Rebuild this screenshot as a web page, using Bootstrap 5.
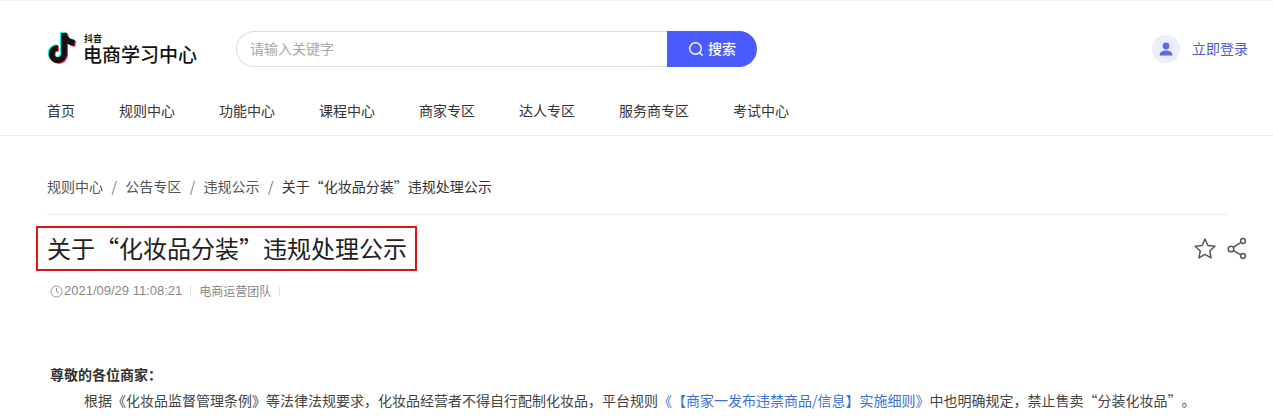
<!DOCTYPE html>
<html lang="zh-CN">
<head>
<meta charset="utf-8">
<title>关于“化妆品分装”违规处理公示</title>
<link rel="stylesheet" href="https://cdn.jsdelivr.net/npm/bootstrap@5.3.0/dist/css/bootstrap.min.css">
<style>
html,body{height:417px;overflow:hidden}
body{font-family:"Noto Sans CJK SC","Liberation Sans",sans-serif;color:#333;background:#fff;font-size:14px;text-spacing-trim:space-all}
.site-head{height:136px;border-top:1px solid #f0f0f0;border-bottom:1px solid #ebebeb;padding:30px 25px 0 47px}
.top-line{height:36px}
.logo-box{width:189px;height:36px}
.logo-words{color:#111;margin-left:5px;font-family:"Liberation Sans","Noto Sans CJK SC",sans-serif}
.logo-small{font-size:9px;font-weight:700;line-height:11px;margin-left:1px}
.logo-big{font-size:19px;font-weight:500;line-height:22px;margin-bottom:-2px;white-space:nowrap}
.search-wrap{width:521px;height:36px}
.search-input{flex:1;height:36px;border:1px solid #dcdcdc;border-right:0;border-radius:18px 0 0 18px;padding:0 13px 2px;font-size:14px;box-shadow:none;font-family:inherit}
.search-input::placeholder{color:#a9a9a9}
.search-btn{width:90px;height:36px;background:#4b5cff;border:0;border-radius:0 18px 18px 0;color:#fff;font-size:14px;padding:0 0 1px;gap:4px;font-weight:500}
.user-dot{width:28px;height:28px;background:#eceefd;border-radius:50%}
.login-link{color:#4a5bd4;text-decoration:none;font-size:14px;margin:-2px 0 0 12px}
.main-nav{margin-top:33px;gap:44px;height:20px}
.main-nav a{color:#333;text-decoration:none;line-height:20px;font-size:14px}
.main-wrap{padding:0 45px 0 47px}
.crumb-line{margin:40px 0 0;padding:0 0 17px;border-bottom:1px solid #ebebeb;height:39px;line-height:20px;font-size:14px}
.crumb-line .breadcrumb-item,.crumb-line a{color:#555;text-decoration:none}
.crumb-line .breadcrumb-item.active{color:#333}
.crumb-line .breadcrumb-item+.breadcrumb-item{padding-left:8.4px}
.crumb-line .breadcrumb-item+.breadcrumb-item::before{color:#777;padding-right:8.4px}
.title-row{margin-top:11px;margin-right:-19px;height:45px}
.title-mark{margin:0 0 0 -11px;border:2px solid #d8161b;height:45px;padding:0 8px 0 9px;font-size:24px;font-weight:400;line-height:39px;color:#222;white-space:nowrap}
.tool-icons{gap:10px;margin-right:0}
.meta-line{margin-top:12px;height:16px;color:#888;font-size:12px;line-height:16px;padding-left:3px}
.meta-date{font-family:"Liberation Sans",sans-serif;font-size:13px;margin-left:1px}
.meta-sep{width:1px;height:10px;background:#e2e2e2;display:inline-block}
.article-text{padding-left:3px;font-size:14px;color:#333}
.greet{margin:65px 0 0;font-weight:700;line-height:20px;color:#333}
.body-para{margin:6px 0 0;text-indent:34px;line-height:20px;white-space:nowrap;color:#444}
.body-para a{color:#3c6fd9;text-decoration:none}
</style>
</head>
<body>
<header class="site-head">
  <div class="top-line d-flex align-items-center justify-content-between">
    <div class="d-flex align-items-center">
      <a class="logo-box d-flex align-items-center text-decoration-none" href="#">
        <svg width="31" height="36" viewBox="0 0 31 36" aria-hidden="true">
          <g fill="none" stroke-width="5.800">
            <path d="M17 2v21a6.200 6.200 0 1 1-6.200-6.200M17 2c.4 5 4 9.300 10.600 10" stroke="#25f4ee" transform="translate(-1.100 -.9)"/>
            <path d="M17 2v21a6.200 6.200 0 1 1-6.200-6.200M17 2c.4 5 4 9.300 10.600 10" stroke="#fe2c55" transform="translate(1.100 .9)"/>
            <path d="M17 2v21a6.200 6.200 0 1 1-6.200-6.200M17 2c.4 5 4 9.300 10.600 10" stroke="#111"/>
          </g>
        </svg>
        <span class="logo-words">
          <span class="logo-small d-block">抖音</span>
          <span class="logo-big d-block">电商学习中心</span>
        </span>
      </a>
      <form class="search-wrap d-flex ms-0" onsubmit="return false">
        <input class="search-input form-control" type="text" placeholder="请输入关键字">
        <button class="search-btn btn d-flex align-items-center justify-content-center" type="button">
          <svg width="16" height="16" viewBox="0 0 16 16" fill="none" stroke="#fff" stroke-width="1.400" aria-hidden="true"><circle cx="7.500" cy="7.500" r="5.800"/><path d="M11.600 11.600l2.600 2.600" stroke-linecap="round"/></svg>
          <span>搜索</span>
        </button>
      </form>
    </div>
    <div class="d-flex align-items-center">
      <span class="user-dot d-flex align-items-center justify-content-center">
        <svg width="14" height="14" viewBox="0 0 14 14" fill="#5a6ae8" aria-hidden="true"><circle cx="7" cy="4" r="3.400"/><path d="M.5 13.500c0-3.600 3-5 6.500-5s6.500 1.400 6.500 5z"/></svg>
      </span>
      <a class="login-link" href="#">立即登录</a>
    </div>
  </div>
  <nav class="main-nav d-flex">
    <a href="#">首页</a><a href="#">规则中心</a><a href="#">功能中心</a><a href="#">课程中心</a><a href="#">商家专区</a><a href="#">达人专区</a><a href="#">服务商专区</a><a href="#">考试中心</a>
  </nav>
</header>
<main class="main-wrap">
  <ol class="breadcrumb crumb-line">
    <li class="breadcrumb-item"><a href="#">规则中心</a></li>
    <li class="breadcrumb-item"><a href="#">公告专区</a></li>
    <li class="breadcrumb-item"><a href="#">违规公示</a></li>
    <li class="breadcrumb-item active">关于“化妆品分装”违规处理公示</li>
  </ol>
  <div class="title-row d-flex align-items-center justify-content-between">
    <h1 class="title-mark">关于“化妆品分装”违规处理公示</h1>
    <div class="tool-icons d-flex align-items-center">
      <svg width="24" height="24" viewBox="0 0 24 24" fill="none" stroke="#555" stroke-width="1.500" stroke-linejoin="round" aria-hidden="true"><path d="M12 2l2.900 6.500 7 .8-5.200 4.700 1.400 6.900-6.100-3.500-6.100 3.500 1.400-6.900-5.200-4.700 7-.8z"/></svg>
      <svg width="20" height="24" viewBox="0 0 20 24" fill="none" stroke="#555" stroke-width="1.500" aria-hidden="true"><circle cx="4" cy="12" r="2.800"/><circle cx="16" cy="4" r="2.400"/><circle cx="16" cy="19" r="2.400"/><path d="M6.400 10.400l7.500-5.100M6.400 13.600l7.500 4.200"/></svg>
    </div>
  </div>
  <div class="meta-line d-flex align-items-center">
    <svg width="13" height="13" viewBox="0 0 13 13" fill="none" stroke="#999" stroke-width="1" aria-hidden="true"><circle cx="6.500" cy="6.500" r="5.500"/><path d="M6.500 3v3.500l2.500 1.500"/></svg>
    <span class="meta-date">2021/09/29 11:08:21</span>
    <span class="meta-sep mx-2"></span>
    <span>电商运营团队</span>
    <span class="meta-sep mx-2"></span>
  </div>
  <article class="article-text">
    <p class="greet">尊敬的各位商家：</p>
    <p class="body-para">根据《化妆品监督管理条例》等法律法规要求，化妆品经营者不得自行配制化妆品，平台规则<a href="#">《【商家一发布违禁商品/信息】实施细则》</a>中也明确规定，禁止售卖“分装化妆品”。</p>
  </article>
</main>
<script src="https://cdn.jsdelivr.net/npm/bootstrap@5.3.0/dist/js/bootstrap.bundle.min.js"></script>
</body>
</html>
